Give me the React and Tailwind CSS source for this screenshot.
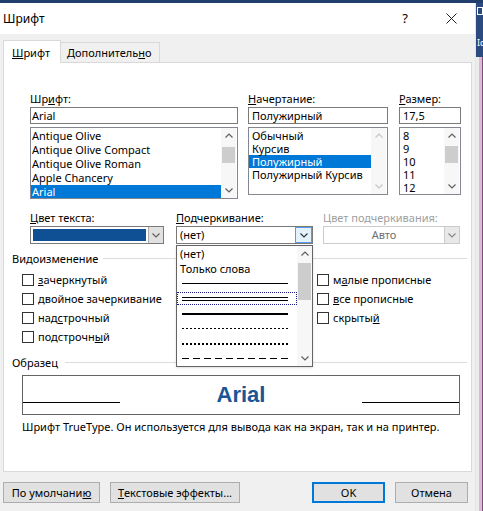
const Chev = ({ up, color = "#606060" }) => (
  <svg width="8" height="5" viewBox="0 0 8 5">
    <polyline
      points={up ? "0.5,4.5 4,1 7.5,4.5" : "0.5,0.5 4,4 7.5,0.5"}
      fill="none"
      stroke={color}
      strokeWidth="1.2"
    />
  </svg>
);

function Scroll({ thumbTop, thumbH, disabled }) {
  const c = disabled ? "#c8c8c8" : "#606060";
  return (
    <div className="w-[15px] flex flex-col bg-[#f7f7f7]">
      <div className="h-[15px] flex items-center justify-center">
        <Chev up color={c} />
      </div>
      <div className="flex-1">
        {!disabled && (
          <div className="mx-[1px] bg-[#cdcdcd]" style={{ marginTop: thumbTop, height: thumbH }} />
        )}
      </div>
      <div className="h-[15px] flex items-center justify-center">
        <Chev color={c} />
      </div>
    </div>
  );
}

function ListBox({ items, sel, rowH, height, thumbTop, thumbH, disabled, pl }) {
  return (
    <div className="flex border border-[#828790] bg-white pr-[1px] overflow-hidden" style={{ height }}>
      <div className="flex-1 pt-[1px]">
        {items.map((t, i) => (
          <div
            key={t}
            className={i === sel ? "bg-[#0078d7] text-white whitespace-nowrap" : "whitespace-nowrap"}
            style={{ height: rowH, lineHeight: rowH + "px", paddingLeft: pl }}
          >
            {t}
          </div>
        ))}
      </div>
      <Scroll thumbTop={thumbTop} thumbH={thumbH} disabled={disabled} />
    </div>
  );
}

const Check = ({ children }) => (
  <div className="h-[19px] flex items-center">
    <div className="w-[12px] h-[12px] border border-[#333] bg-white" />
    <span className="ml-[4px] whitespace-nowrap">{children}</span>
  </div>
);

const Sec = ({ title, gap }) => (
  <div className="flex items-center h-[15px] ml-[8px] mr-[4px]">
    <span>{title}</span>
    <div className="flex-1 h-px bg-[#dcdcdc]" style={{ marginLeft: gap }} />
  </div>
);

export default function App() {
  const fonts = ["Antique Olive", "Antique Olive Compact", "Antique Olive Roman", "Apple Chancery", "Arial"];
  const styles = ["Обычный", "Курсив", "Полужирный", "Полужирный Курсив"];
  const sizes = ["8", "9", "10", "11", "12"];

  return (
    <div className="flex flex-col w-[483px] h-[511px] overflow-hidden bg-[#f0f0f0] font-['Noto_Sans',sans-serif] text-[11px] leading-[15px] text-black">
      <div className="h-[3px] shrink-0 bg-[#213e6e]" />
      <div className="flex flex-1">
        <div className="w-[476px] flex flex-col border-r border-[#e4e4e4]">
          {/* title bar */}
          <div className="h-[31px] bg-white flex items-center pl-[3px] pr-[18px]">
            <span className="text-[12px]">Шрифт</span>
            <span className="ml-auto mr-[38px] text-[13px]">?</span>
            <svg width="11" height="11" viewBox="0 0 11 11">
              <path d="M0.5 0.5 L10.5 10.5 M10.5 0.5 L0.5 10.5" stroke="#222" strokeWidth="1" />
            </svg>
          </div>

          {/* tabs */}
          <div className="h-[28px] flex items-end pl-[3px]">
            <div className="relative z-10 -mb-px h-[23px] w-[58px] bg-white border border-b-0 border-[#d9d9d9] pl-[8px] pt-[4px]">
              <span className="underline">Ш</span>рифт
            </div>
            <div className="h-[20px] w-[99px] border border-l-0 border-b-0 border-[#d9d9d9] pl-[6px] pt-[2px]">
              Дополнитель<span className="underline">н</span>о
            </div>
          </div>

          {/* panel */}
          <div className="relative mx-[3px] h-[410px] bg-white border border-[#d9d9d9]">
            {/* font row */}
            <div className="flex ml-[26px] mt-[28px]">
              <div className="w-[208px]">
                <div className="h-[15px]">Шр<span className="underline">и</span>фт:</div>
                <div className="mt-[1px] h-[17px] border border-[#7a7a7a] pl-[1px]">Arial</div>
                <div className="mt-[3px]">
                  <ListBox items={fonts} sel={4} rowH={14} height={72} thumbTop={4} thumbH={16} pl={1} />
                </div>
              </div>
              <div className="w-[140px] ml-[10px]">
                <div className="h-[15px]"><span className="underline">Н</span>ачертание:</div>
                <div className="mt-[1px] h-[17px] border border-[#7a7a7a] pl-[3px]">Полужирный</div>
                <div className="mt-[3px]">
                  <ListBox items={styles} sel={2} rowH={13} height={68} disabled pl={3} />
                </div>
              </div>
              <div className="w-[62px] ml-[11px]">
                <div className="h-[15px]"><span className="underline">Р</span>азмер:</div>
                <div className="mt-[1px] h-[17px] border border-[#7a7a7a] pl-[3px]">17,5</div>
                <div className="mt-[3px]">
                  <ListBox items={sizes} sel={-1} rowH={13} height={68} thumbTop={3} thumbH={17} pl={3} />
                </div>
              </div>
            </div>

            {/* colour / underline row */}
            <div className="flex ml-[26px] mt-[11px]">
              <div className="w-[134px]">
                <div className="h-[15px]"><span className="underline">Ц</span>вет текста:</div>
                <div className="mt-px h-[18px] flex border border-[#7a7a7a] bg-white">
                  <div className="flex-1 m-[2px] bg-[#0f4f94]" />
                  <div className="w-[15px] flex items-center justify-center bg-[#e1e1e1] border-l border-[#adadad]">
                    <Chev />
                  </div>
                </div>
              </div>
              <div className="w-[137px] ml-[12px]">
                <div className="h-[15px]"><span className="underline">П</span>одчеркивание:</div>
                <div className="mt-px h-[18px] flex border border-[#7a7a7a] bg-white">
                  <div className="flex-1 pl-[3px] leading-[16px]">(нет)</div>
                  <div className="w-[17px] flex items-center justify-center bg-[#e5f1fb] border border-[#569de5]">
                    <Chev color="#333" />
                  </div>
                </div>
              </div>
              <div className="w-[137px] ml-[10px]">
                <div className="h-[15px] text-[#a0a0a0]">Цвет подчеркивания:</div>
                <div className="mt-px h-[18px] flex border border-[#cccccc] bg-white">
                  <div className="flex-1 text-center leading-[16px] text-[#707070]">Авто</div>
                  <div className="w-[15px] flex items-center justify-center bg-[#e8e8e8] border-l border-[#cccccc]">
                    <Chev color="#888" />
                  </div>
                </div>
              </div>
            </div>

            {/* effects */}
            <div className="mt-[7px]">
              <Sec title="Видоизменение" gap={5} />
            </div>
            <div className="flex mt-[4px] ml-[18px]">
              <div className="w-[295px]">
                <Check><span className="underline">з</span>ачеркнутый</Check>
                <Check><span className="underline">д</span>войное зачеркивание</Check>
                <Check>над<span className="underline">с</span>трочный</Check>
                <Check>подстрочн<span className="underline">ы</span>й</Check>
              </div>
              <div>
                <Check>м<span className="underline">а</span>лые прописные</Check>
                <Check><span className="underline">в</span>се прописные</Check>
                <Check>скрыты<span className="underline">й</span></Check>
              </div>
            </div>

            {/* sample */}
            <div className="mt-[9px]">
              <Sec title="Образец" gap={7} />
            </div>
            <div className="mt-[5px] ml-[18px] w-[438px] h-[40px] flex border border-[#646464]">
              <div className="w-[97px] h-px mt-[26px] bg-black" />
              <div className="flex-1 text-center font-['Liberation_Sans',sans-serif] font-bold text-[22px] leading-[38px] text-[#1b5593]">
                Arial
              </div>
              <div className="w-[97px] h-px mt-[26px] bg-black" />
            </div>
            <div className="mt-[4px] ml-[18px] h-[15px] whitespace-nowrap">
              Шрифт TrueType. Он используется для вывода как на экран, так и на принтер.
            </div>

            {/* open underline dropdown */}
            <div className="absolute left-[172px] top-[182px] w-[137px] h-[122px] flex border border-[#646464] bg-white shadow-sm">
              <div className="flex-1">
                <div className="h-[15px] pl-[3px]">(нет)</div>
                <div className="h-[15px] pl-[3px]">Только слова</div>
                <div className="h-[15px] flex items-center pl-[5px]">
                  <div className="w-[106px] h-px bg-black" />
                </div>
                <div className="h-[15px] flex items-center">
                  <div className="w-full h-[13px] border border-dotted border-[#1a1a80] flex flex-col justify-center pl-[4px] gap-[2px]">
                    <div className="w-[106px] h-px bg-black" />
                    <div className="w-[106px] h-px bg-black" />
                  </div>
                </div>
                <div className="h-[15px] flex items-center pl-[5px]">
                  <div className="w-[106px] h-[2px] bg-black" />
                </div>
                <div className="h-[15px] flex items-center pl-[5px]">
                  <div className="w-[106px] h-px bg-[repeating-linear-gradient(90deg,#000_0_2px,transparent_2px_4px)]" />
                </div>
                <div className="h-[15px] flex items-center pl-[5px]">
                  <div className="w-[106px] h-[2px] bg-[repeating-linear-gradient(90deg,#000_0_2px,transparent_2px_4px)]" />
                </div>
                <div className="h-[15px] flex items-center pl-[5px]">
                  <div className="w-[106px] h-px bg-[repeating-linear-gradient(90deg,#000_0_7px,transparent_7px_11px)]" />
                </div>
              </div>
              <Scroll thumbTop={2} thumbH={37} />
            </div>
          </div>

          {/* buttons */}
          <div className="flex mt-[10px] pl-[3px]">
            <div className="w-[97px] h-[21px] bg-[#e1e1e1] border border-[#adadad] flex items-center justify-center">
              По умолчани<span className="underline">ю</span>
            </div>
            <div className="w-[130px] ml-[10px] h-[21px] bg-[#e1e1e1] border border-[#adadad] flex items-center justify-center">
              <span className="underline">Т</span>екстовые эффекты...
            </div>
            <div className="w-[73px] ml-[72px] h-[21px] bg-[#e1e1e1] border-2 border-[#0078d7] flex items-center justify-center">
              OK
            </div>
            <div className="w-[73px] ml-[10px] h-[21px] bg-[#e1e1e1] border border-[#adadad] flex items-center justify-center">
              Отмена
            </div>
          </div>
        </div>

        {/* window behind */}
        <div className="flex-1 flex flex-col overflow-hidden">
          <div className="h-[54px] bg-[#2b4a80] pl-[1px] pt-[4px] text-white text-[9px] leading-[12px]">
            <div className="w-[6px] h-[8px] border border-white" />
            <div className="mt-[22px]">Ic</div>
          </div>
          <div className="flex-1 flex bg-[#ececec]">
            <div className="w-[3px]" />
            <div className="w-[3px] bg-[#dcb9d4]" />
            <div className="w-px bg-[#7d4f7a]" />
          </div>
        </div>
      </div>
    </div>
  );
}
